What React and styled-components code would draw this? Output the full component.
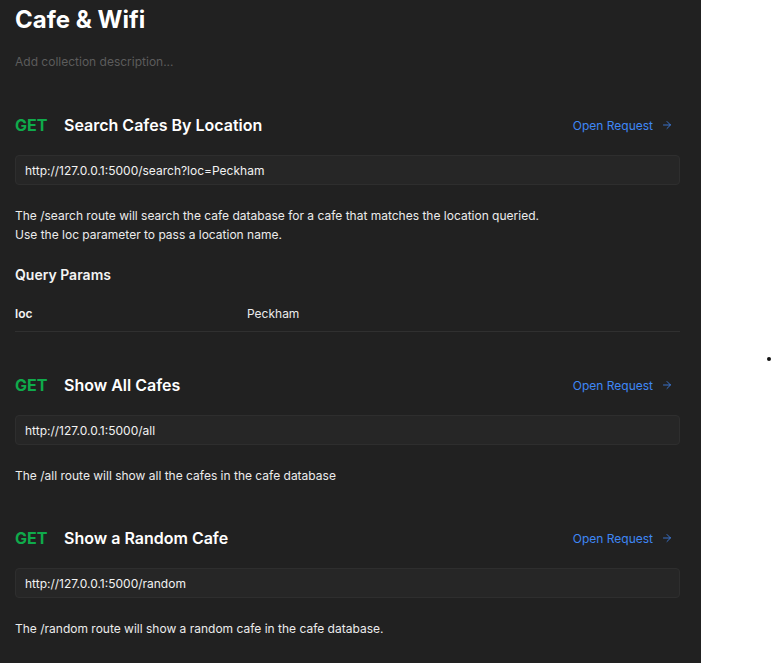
import React from "react";
import styled, { createGlobalStyle } from "styled-components";
import { ArrowRight } from "lucide-react";

const GlobalStyle = createGlobalStyle`
  body {
    margin: 0;
    background: #ffffff;
    font-family: Inter, "Noto Sans", sans-serif;
  }
`;

const Page = styled.div`
  display: flex;
  min-height: 663px;
`;

const Panel = styled.div`
  width: 701px;
  box-sizing: border-box;
  padding: 5px 21px 24px 15px;
  background: #212121;
  color: #ececec;
`;

const Side = styled.div`
  flex: 1;
  padding: 357px 0 0 66px;
`;

const Dot = styled.div`
  width: 4px;
  height: 4px;
  border-radius: 2px;
  background: #111;
`;

const Title = styled.h1`
  margin: 0;
  font-size: 24px;
  line-height: 30px;
  font-weight: 700;
  color: #ffffff;
`;

const Placeholder = styled.div`
  margin-top: 17px;
  font-size: 12px;
  line-height: 20px;
  color: #5c5c5c;
`;

const Section = styled.section`
  margin-top: 41px;
`;

const Head = styled.div`
  display: flex;
  align-items: center;
  height: 24px;
`;

const Method = styled.span`
  width: 49px;
  font-size: 16px;
  font-weight: 700;
  color: #0faa4b;
`;

const Name = styled.span`
  flex: 1;
  font-size: 16px;
  font-weight: 600;
  color: #ffffff;
`;

const OpenLink = styled.a`
  display: flex;
  align-items: center;
  gap: 8px;
  margin-right: 7px;
  font-size: 12px;
  color: #3f87f5;
  text-decoration: none;
  cursor: pointer;
`;

const UrlBox = styled.div`
  margin-top: 18px;
  height: 30px;
  box-sizing: border-box;
  padding: 0 9px;
  display: flex;
  align-items: center;
  background: #262626;
  border: 1px solid #2e2e2e;
  border-radius: 4px;
  font-size: 12px;
  color: #f2f2f2;
`;

const Text = styled.p`
  margin: 21px 0 0;
  font-size: 12px;
  line-height: 19px;
  color: #ececec;
`;

const SubTitle = styled.h3`
  margin: 21px 0 0;
  font-size: 14px;
  line-height: 20px;
  font-weight: 600;
  color: #f4f4f4;
`;

const Params = styled.div`
  margin: 11px 0 1px;
`;

const ParamRow = styled.div`
  display: grid;
  grid-template-columns: 232px 1fr;
  padding: 8px 0 7px;
  line-height: 20px;
  font-size: 12px;
  border-bottom: 1px solid #303030;
`;

const Key = styled.span`
  font-weight: 600;
  color: #f4f4f4;
`;

const requests = [
  {
    name: "Search Cafes By Location",
    url: "http://127.0.0.1:5000/search?loc=Peckham",
    desc: [
      "The /search route will search the cafe database for a cafe that matches the location queried.",
      "Use the loc parameter to pass a location name.",
    ],
    params: [["loc", "Peckham"]],
  },
  {
    name: "Show All Cafes",
    url: "http://127.0.0.1:5000/all",
    desc: ["The /all route will show all the cafes in the cafe database"],
  },
  {
    name: "Show a Random Cafe",
    url: "http://127.0.0.1:5000/random",
    desc: ["The /random route will show a random cafe in the cafe database."],
  },
];

const Request = ({ req }) => (
  <Section>
    <Head>
      <Method>GET</Method>
      <Name>{req.name}</Name>
      <OpenLink>
        Open Request <ArrowRight size={12} strokeWidth={1.6} />
      </OpenLink>
    </Head>
    <UrlBox>{req.url}</UrlBox>
    <Text>
      {req.desc.map((line, i) => (
        <React.Fragment key={i}>
          {line}
          {i < req.desc.length - 1 && <br />}
        </React.Fragment>
      ))}
    </Text>
    {req.params && (
      <>
        <SubTitle>Query Params</SubTitle>
        <Params>
          {req.params.map(([k, v]) => (
            <ParamRow key={k}>
              <Key>{k}</Key>
              <span>{v}</span>
            </ParamRow>
          ))}
        </Params>
      </>
    )}
  </Section>
);

const App = () => (
  <>
    <GlobalStyle />
    <Page>
      <Panel>
        <Title>Cafe &amp; Wifi</Title>
        <Placeholder>Add collection description...</Placeholder>
        {requests.map((r) => (
          <Request key={r.name} req={r} />
        ))}
      </Panel>
      <Side>
        <Dot />
      </Side>
    </Page>
  </>
);

export default App;
